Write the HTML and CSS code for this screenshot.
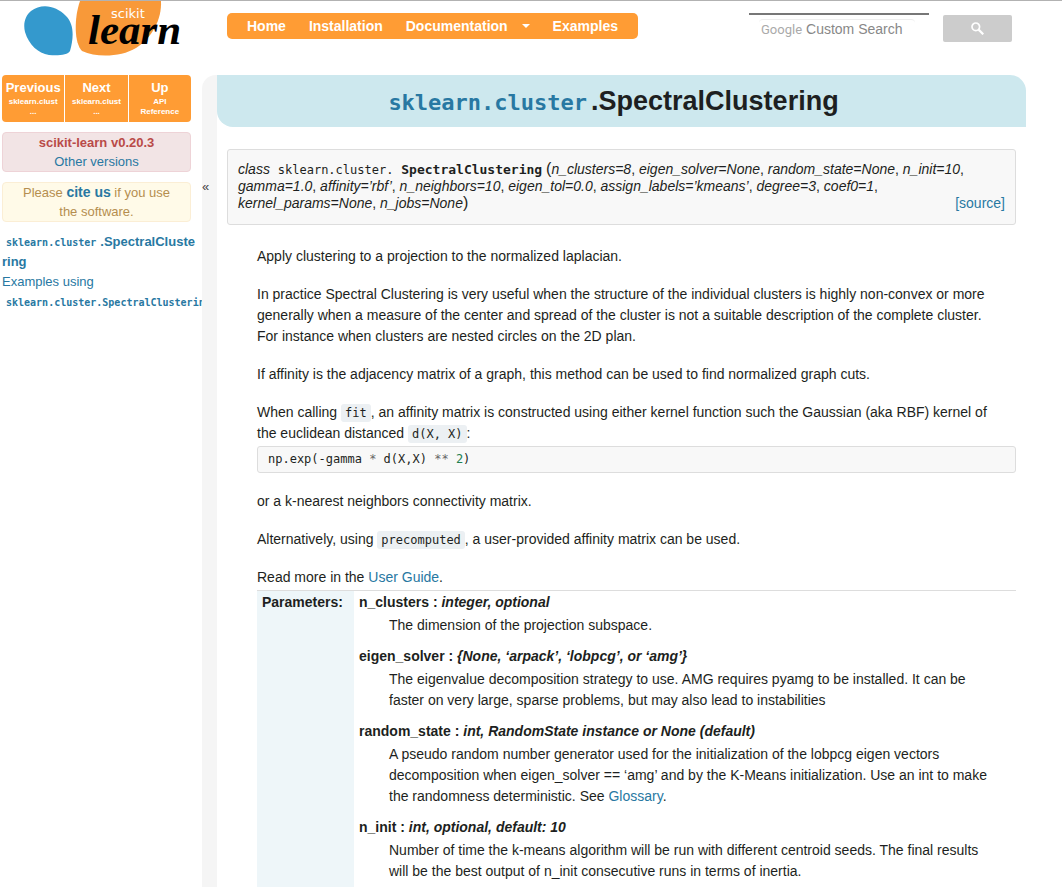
FILE: index.html
```html
<!DOCTYPE html>
<html lang="en">
<head>
<meta charset="utf-8">
<title>sklearn.cluster.SpectralClustering</title>
<link rel="stylesheet" href="styles.css">
</head>
<body>
<header class="header">
  <a class="logo" href="#" aria-label="scikit-learn">
    <svg width="160" height="58" viewBox="0 0 160 58">
      <path fill="#3499cd" d="M7 10C17 2 32 4 42 15C50 23 50 36 46 50C44 54 34 55 25 54C14 52 5 44 1 31C-1 23 1 15 7 10Z"/>
      <path fill="#f89939" d="M56 0H137C138 18 128 37 112 47C97 56 73 57 58 50C50 42 50 17 56 0Z"/>
      <text class="logo-top" x="87" y="17">scikit</text>
      <text class="logo-name" x="64" y="43">learn</text>
    </svg>
  </a>
  <nav class="nav">
    <a href="#">Home</a>
    <a href="#">Installation</a>
    <a class="has-menu" href="#">Documentation <span class="caret"></span></a>
    <a href="#">Examples</a>
  </nav>
  <form class="search">
    <label class="search-field">
      <span class="search-box">
        <span class="google">Google</span>
        <input type="text" placeholder="Custom Search" aria-label="Custom Search">
      </span>
    </label>
    <button type="button" aria-label="Search">
      <svg width="13" height="13" viewBox="0 0 13 13"><circle cx="4.8" cy="4.8" r="3.8" fill="none" stroke="#fff" stroke-width="1.7"/><path d="M7.6 7.6L12.3 12.3" stroke="#fff" stroke-width="2.2"/></svg>
    </button>
  </form>
</header>
<div class="page">
  <aside class="sidebar">
    <div class="rellinks">
      <a href="#">Previous<small>sklearn.clust<br>...</small></a>
      <a href="#">Next<small>sklearn.clust<br>...</small></a>
      <a href="#">Up<small>API<br>Reference</small></a>
    </div>
    <p class="note version"><b>scikit-learn v0.20.3</b><br><a href="#">Other versions</a></p>
    <p class="note cite">Please <a href="#"><b>cite us</b></a> if you use<br>the software.</p>
    <ul class="toc">
      <li><a href="#"><b><code>sklearn.cluster</code>.SpectralCluste<br>ring</b></a></li>
      <li><a href="#">Examples using <br><b><code>sklearn.cluster.SpectralClustering</code></b></a></li>
    </ul>
  </aside>
  <button class="toggle" type="button" aria-label="Collapse sidebar">«</button>
  <main class="content">
    <h1><a href="#"><code>sklearn.cluster</code></a>.SpectralClustering</h1>
    <div class="body">
      <div class="signature">
        <em>class</em> <code class="module">sklearn.cluster.</code> <code class="name">SpectralClustering</code> <span class="paren">(</span><em>n_clusters=8</em>, <em>eigen_solver=None</em>, <em>random_state=None</em>, <em>n_init=10</em>,<br><em>gamma=1.0</em>, <em>affinity=’rbf’</em>, <em>n_neighbors=10</em>, <em>eigen_tol=0.0</em>, <em>assign_labels=’kmeans’</em>, <em>degree=3</em>, <em>coef0=1</em>,<br><em>kernel_params=None</em>, <em>n_jobs=None</em><span class="paren">)</span>
        <a class="source" href="#">[source]</a>
      </div>
      <div class="description">
        <p>Apply clustering to a projection to the normalized laplacian.</p>
        <p>In practice Spectral Clustering is very useful when the structure of the individual clusters is highly non-convex or more<br>generally when a measure of the center and spread of the cluster is not a suitable description of the complete cluster.<br>For instance when clusters are nested circles on the 2D plan.</p>
        <p>If affinity is the adjacency matrix of a graph, this method can be used to find normalized graph cuts.</p>
        <p class="tight">When calling <code>fit</code>, an affinity matrix is constructed using either kernel function such the Gaussian (aka RBF) kernel of<br>the euclidean distanced <code>d(X, X)</code>:</p>
        <pre>np.exp(-gamma <i>*</i> d(X,X) <i>**</i> <span>2</span>)</pre>
        <p>or a k-nearest neighbors connectivity matrix.</p>
        <p>Alternatively, using <code>precomputed</code>, a user-provided affinity matrix can be used.</p>
        <p class="tight">Read more in the <a href="#">User Guide</a>.</p>
        <table>
          <tr>
            <th scope="row">Parameters:</th>
            <td>
              <dl>
                <dt>n_clusters : <em>integer, optional</em></dt>
                <dd>The dimension of the projection subspace.</dd>
                <dt>eigen_solver : <em>{None, ‘arpack’, ‘lobpcg’, or ‘amg’}</em></dt>
                <dd>The eigenvalue decomposition strategy to use. AMG requires pyamg to be installed. It can be<br>faster on very large, sparse problems, but may also lead to instabilities</dd>
                <dt>random_state : <em>int, RandomState instance or None (default)</em></dt>
                <dd>A pseudo random number generator used for the initialization of the lobpcg eigen vectors<br>decomposition when eigen_solver == ‘amg’ and by the K-Means initialization. Use an int to make<br>the randomness deterministic. See <a href="#">Glossary</a>.</dd>
                <dt>n_init : <em>int, optional, default: 10</em></dt>
                <dd>Number of time the k-means algorithm will be run with different centroid seeds. The final results<br>will be the best output of n_init consecutive runs in terms of inertia.</dd>
              </dl>
            </td>
          </tr>
        </table>
      </div>
    </div>
  </main>
</div>
</body>
</html>
```
FILE: styles.css
```css
* { box-sizing: border-box; }
body {
  margin: 0;
  min-height: 100vh;
  display: flex;
  flex-direction: column;
  border-top: 1px solid #b2b2b2;
  background: #fff;
  color: #1d1f21;
  font: 14px/21px "Liberation Sans", Arial, sans-serif;
}
a { color: #2878a2; text-decoration: none; }
code, pre { font-family: "DejaVu Sans Mono", monospace; }
code { line-height: 1; }

.header { display: flex; align-items: flex-start; height: 74px; padding: 0 50px 0 24px; }
.logo { width: 203px; }
.logo svg { display: block; }
.logo-top { font: 13px "DejaVu Sans", sans-serif; fill: #fff; }
.logo-name { font: italic bold 43px "Liberation Serif", serif; fill: #000; }

.nav {
  display: flex;
  width: 411px;
  height: 26px;
  margin-top: 12px;
  padding: 0 20px;
  justify-content: space-between;
  border-radius: 5px;
  background: #ff9c34;
  line-height: 26px;
}
.nav a { color: #fff; font-weight: bold; }
.nav .has-menu { display: flex; align-items: center; gap: 14px; }
.caret { border: 4px solid transparent; border-top-color: #fff; border-bottom: 0; }

.search { display: flex; gap: 14px; margin: 12px 0 0 auto; }
.search-field { display: block; width: 180px; padding: 4px 14px 0 10px; border-top: 2px solid #777; }
.search-box { display: flex; align-items: center; gap: 4px; height: 20px; padding: 0 2px; border-top: 1px solid #eee; border-radius: 4px; }
.google { color: #aaa; font-family: Roboto, sans-serif; font-size: 13px; }
.search input { flex: 1; min-width: 0; padding: 0; border: 0; background: none; font: inherit; }
.search input::placeholder { color: #888; opacity: 1; }
.search button { display: grid; place-items: center; width: 69px; height: 27px; margin-top: 2px; border: 0; border-radius: 2px; background: #ccc; }

.page { display: flex; flex: 1; }
.sidebar { width: 202px; padding-left: 2px; overflow: hidden; font-size: 13px; }
.rellinks { display: flex; gap: 1px; width: 189px; height: 47px; border-radius: 4px; overflow: hidden; }
.rellinks a { flex: 1; min-width: 0; padding-top: 4px; background: #ff9c34; color: #fff; font-weight: bold; line-height: 18px; text-align: center; }
.rellinks small { display: block; font-size: 8px; line-height: 10px; }
.note { width: 189px; height: 40px; margin: 10px 0; border: 1px solid; border-radius: 4px; line-height: 19px; text-align: center; }
.version { border-color: #eed3d7; background: #f2e4e5; color: #b94a48; }
.cite { border-color: #fbeed5; background: #fffae8; color: #b58e4f; }
.cite a { font-size: 14px; }
.toc { margin: 0; padding: 0; list-style: none; line-height: 20px; white-space: nowrap; }
.toc code { padding: 0 4px; font-size: 10px; }

.toggle { display: flex; width: 15px; padding: 104px 0 0; border: 0; border-radius: 14px 0 0 0; background: #f5f5f5; color: #444; font: 13px "Liberation Sans", sans-serif; }
.content { flex: 1; margin-right: 36px; }
h1 { height: 52px; margin: 0; padding-right: 16px; border-radius: 0 16px 0 16px; background: #cde8ee; font-size: 27px; line-height: 52px; text-align: center; }
h1 code { padding-right: 4px; font-size: 22px; }
.body { padding: 22px 10px 0; }

.signature { padding: 11px 10px 12px; border: 1px solid #ddd; border-radius: 3px; background: #f8f8f8; line-height: 17px; }
.source { float: right; }
.module { padding: 0 4px; font-size: 12px; }
.name { font-size: 13px; font-weight: bold; }
.paren { font-size: 16px; line-height: 1; }

.description { margin: 21px 0 0 30px; }
p { margin: 0 0 17px; }
p.tight { margin: 0; }
p code { padding: 2px 4px; border-radius: 3px; background: #ecf0f3; font-size: 12px; }
pre { margin: 2px 0 18px; padding: 2px 10px; border: 1px solid #ddd; border-radius: 3px; background: #f8f8f8; font-size: 12px; }
pre i { color: #666; font-style: normal; }
pre span { color: #208050; }

table { width: 100%; margin-top: 2px; border-spacing: 0; border-top: 1px solid #ddd; }
th { width: 97px; padding: 1px 5px; background: #eef6f9; text-align: left; vertical-align: top; }
td { padding: 1px 5px; vertical-align: top; }
dl { margin: 0; }
dt { margin-bottom: 2px; font-weight: bold; }
dd { margin: 0 0 10px 30px; }
```
